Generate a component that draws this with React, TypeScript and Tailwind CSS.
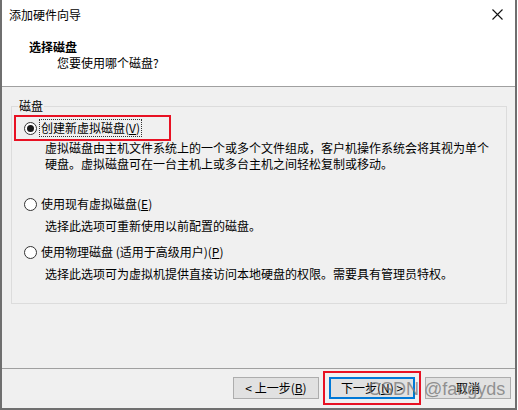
const font = { fontFamily: '"Noto Sans CJK SC", "Noto Sans", sans-serif' };

function Radio({ checked }: { checked?: boolean }) {
  return (
    <span className="w-[13px] h-[13px] rounded-full border border-[#333333] bg-white flex items-center justify-center shrink-0">
      {checked && <span className="w-[7px] h-[7px] rounded-full bg-[#1a1a1a]" />}
    </span>
  );
}

function Button({ children, primary }: { children: React.ReactNode; primary?: boolean }) {
  return (
    <div
      className={
        'w-[86px] h-[22px] flex items-center justify-center bg-[#e1e1e1] text-[12px] text-black ' +
        (primary ? 'border-2 border-[#0078d7]' : 'border border-[#adadad]')
      }
    >
      {children}
    </div>
  );
}

export default function App() {
  return (
    <div
      className="relative w-[517px] h-[410px] bg-white border-l-2 border-r-2 border-b-2 border-[#6f6f6f] flex flex-col text-black overflow-hidden"
      style={font}
    >
      {/* title bar */}
      <div className="h-[30px] flex items-center justify-between pl-[7px] pr-[12px] bg-white">
        <span className="text-[12px] leading-none">添加硬件向导</span>
        <svg width="11" height="11" viewBox="0 0 11 11" className="mt-[-1px]">
          <path d="M0.5 0.5L10.5 10.5M10.5 0.5L0.5 10.5" stroke="#111" strokeWidth="1.1" />
        </svg>
      </div>

      {/* header */}
      <div className="h-[57px] bg-white border-b border-[#a0a0a0] flex flex-col">
        <div className="pl-[27px] mt-[9px] text-[12px] leading-[16px] font-bold">选择磁盘</div>
        <div className="pl-[55px] text-[12px] leading-[16px]">您要使用哪个磁盘?</div>
      </div>

      {/* body */}
      <div className="flex-1 bg-[#f0f0f0] flex flex-col">
        <div className="relative mt-[19px] ml-[9px] w-[496px] h-[198px] border border-[#dcdcdc] flex flex-col">
          <span className="absolute left-[6px] top-[-9px] px-[1px] bg-[#f0f0f0] text-[12px] leading-[16px]">磁盘</span>

          <div className="mt-[8px] ml-[2px] w-[157px] h-[26px] border-2 border-[#e81123] flex items-center pl-[8px]">
            <Radio checked />
            <span className="ml-[3px] px-[1px] text-[12px] leading-[16px] outline-1 outline-dotted outline-[#333]">
              创建新虚拟磁盘(<span className="underline">V</span>)
            </span>
          </div>
          <div className="mt-[-1px] pl-[33px] text-[12px] leading-[16px]">
            <div>虚拟磁盘由主机文件系统上的一个或多个文件组成，客户机操作系统会将其视为单个</div>
            <div>硬盘。虚拟磁盘可在一台主机上或多台主机之间轻松复制或移动。</div>
          </div>

          <div className="mt-[23px] pl-[12px] h-[18px] flex items-center">
            <Radio />
            <span className="ml-[4px] text-[12px] leading-[16px]">
              使用现有虚拟磁盘(<span className="underline">E</span>)
            </span>
          </div>
          <div className="mt-[5px] pl-[33px] text-[12px] leading-[16px]">选择此选项可重新使用以前配置的磁盘。</div>

          <div className="mt-[9px] pl-[12px] h-[18px] flex items-center">
            <Radio />
            <span className="ml-[4px] text-[12px] leading-[16px]">
              使用物理磁盘 (适用于高级用户)(<span className="underline">P</span>)
            </span>
          </div>
          <div className="mt-[5px] pl-[33px] text-[12px] leading-[16px]">
            选择此选项可为虚拟机提供直接访问本地硬盘的权限。需要具有管理员特权。
          </div>
        </div>

        <div className="mt-[64px] border-t border-[#a0a0a0]" />

        <div className="mt-[8px] flex items-center pl-[231px] gap-[10px]">
          <Button>
            &lt; 上一步(<span className="underline">B</span>)
          </Button>
          <div className="p-[4px] my-[-6px] mx-[-6px] border-2 border-[#e81123]">
            <Button primary>
              下一步(<span className="underline">N</span>) &gt;
            </Button>
          </div>
          <Button>取消</Button>
        </div>
      </div>

      {/* watermark */}
      <span
        className="absolute left-[366px] top-[378px] z-10 text-[18px] leading-[22px] text-[#7a7a7a]/80 pointer-events-none"
        style={{ fontFamily: '"Liberation Sans", sans-serif' }}
      >
        CSDN @fangyds
      </span>
    </div>
  );
}
